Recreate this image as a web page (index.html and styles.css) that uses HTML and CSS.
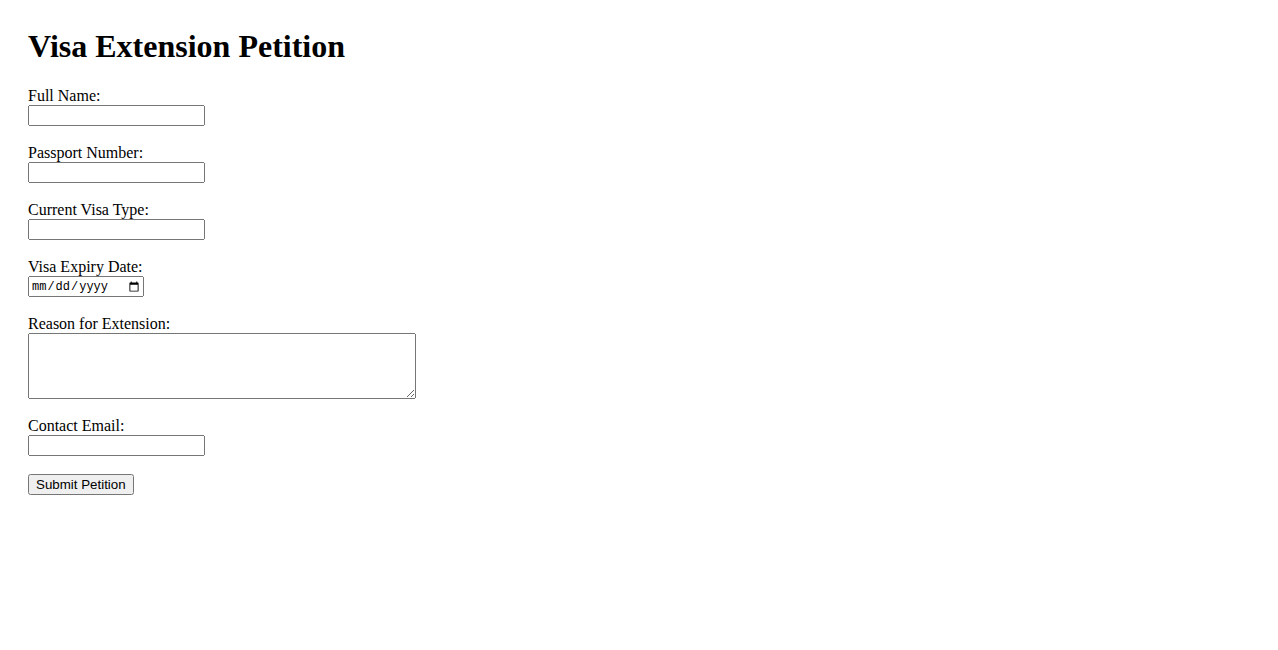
FILE: index.html
```html
<!DOCTYPE html>
<html>
<head>
<meta charset="utf-8">
<title>Visa Extension Petition</title>
<link rel="stylesheet" href="styles.css">
</head>
<body>
<div class="page">
<h1 class="title">Visa Extension Petition</h1>
<form class="form">
<label class="label" for="name">Full Name:</label><br>
<input class="field" type="text" id="name"><br><br>
<label class="label" for="passport">Passport Number:</label><br>
<input class="field" type="text" id="passport"><br><br>
<label class="label" for="visa">Current Visa Type:</label><br>
<input class="field" type="text" id="visa"><br><br>
<label class="label" for="expiry">Visa Expiry Date:</label><br>
<input class="field date" type="date" id="expiry"><br><br>
<label class="label" for="reason">Reason for Extension:</label><br>
<textarea class="area" id="reason" rows="4" cols="50"></textarea><br><br>
<label class="label" for="email">Contact Email:</label><br>
<input class="field" type="email" id="email"><br><br>
<button class="submit" type="submit">Submit Petition</button>
</form>
</div>
</body>
</html>
```
FILE: styles.css
```css
body {
  margin: 0;
  font-family: "Liberation Serif", "Times New Roman", serif;
  color: #000;
  background: #fff;
}
.page {
  padding: 7px 28px 4px;
}
.title {
  font-size: 32px;
  font-weight: bold;
  margin: 21.44px 0;
}
.form {
  margin: 0;
  font-size: 16px;
}
.field, .submit {
  font-family: Arial, "Liberation Sans", sans-serif;
  font-size: 13.33px;
}
.field {
  box-sizing: border-box;
  width: 177px;
  height: 21px;
}
.date {
  width: 116px;
  font-family: "Liberation Mono", "DejaVu Sans Mono", monospace;
  font-size: 12px;
}
.area {
  box-sizing: border-box;
  width: 388px;
  height: 66px;
  font-family: "Liberation Mono", monospace;
  font-size: 13.33px;
  vertical-align: bottom;
}
```
